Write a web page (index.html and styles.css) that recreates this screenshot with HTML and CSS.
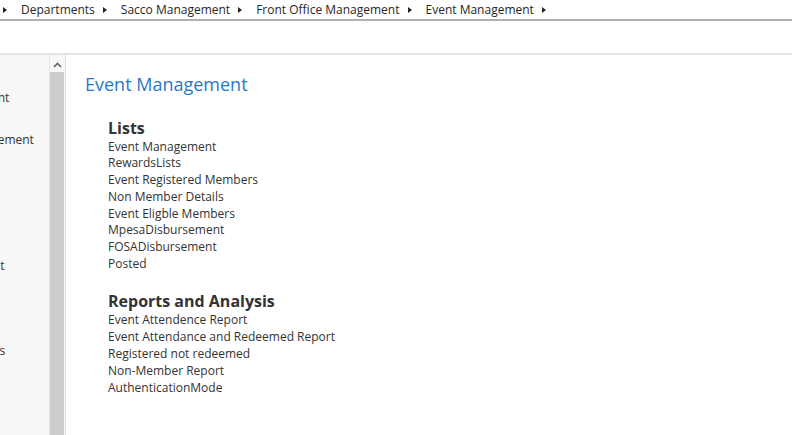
FILE: index.html
```html
<!DOCTYPE html>
<html>
<head>
<meta charset="utf-8">
<link rel="stylesheet" href="styles.css">
</head>
<body>
<div class="breadcrumb">
  <span class="arrow"></span><span class="crumb">Departments</span>
  <span class="arrow"></span><span class="crumb">Sacco Management</span>
  <span class="arrow"></span><span class="crumb">Front Office Management</span>
  <span class="arrow"></span><span class="crumb">Event Management</span>
  <span class="arrow"></span>
</div>
<div class="toolbar"></div>
<div class="main">
  <nav class="nav">
    <ul class="nav-list">
      <li class="nav-item nav-item-1">Sacco Management</li>
      <li class="nav-item nav-item-2">Front Desk Management</li>
      <li class="nav-item nav-item-3">Loans Management</li>
      <li class="nav-item nav-item-4">Setups and Reports</li>
    </ul>
  </nav>
  <div class="scrollbar">
    <div class="scroll-up">
      <svg width="9" height="6" viewBox="0 0 9 6"><path d="M1 5 L4.5 1.5 L8 5" fill="none" stroke="#606060" stroke-width="1.6"/></svg>
    </div>
    <div class="scroll-thumb"></div>
  </div>
  <div class="divider"></div>
  <main class="content">
    <h1 class="page-title">Event Management</h1>
    <section class="group">
      <h2 class="group-title">Lists</h2>
      <ul class="links">
        <li>Event Management</li>
        <li>RewardsLists</li>
        <li>Event Registered Members</li>
        <li>Non Member Details</li>
        <li>Event Eligble Members</li>
        <li>MpesaDisbursement</li>
        <li>FOSADisbursement</li>
        <li>Posted</li>
      </ul>
    </section>
    <section class="group group-reports">
      <h2 class="group-title">Reports and Analysis</h2>
      <ul class="links">
        <li>Event Attendence Report</li>
        <li>Event Attendance and Redeemed Report</li>
        <li>Registered not redeemed</li>
        <li>Non-Member Report</li>
        <li>AuthenticationMode</li>
      </ul>
    </section>
  </main>
</div>
</body>
</html>
```
FILE: styles.css
```css
* { box-sizing: border-box; }
html, body {
  margin: 0;
  padding: 0;
  height: 100%;
  overflow: hidden;
  background: #ffffff;
  font-family: "Open Sans", "Noto Sans", sans-serif;
  color: #333333;
}
.breadcrumb {
  height: 21px;
  border-bottom: 2px solid #b0b0b0;
  display: flex;
  align-items: center;
  padding-left: 3px;
  font-size: 12px;
  color: #262626;
  white-space: nowrap;
}
.arrow {
  display: inline-block;
  width: 0;
  height: 0;
  border-left: 4px solid #222;
  border-top: 3.5px solid transparent;
  border-bottom: 3.5px solid transparent;
  margin-right: 14px;
}
.crumb {
  margin-right: 8px;
}
.toolbar {
  height: 34px;
  border-bottom: 2px solid #e4e4e4;
}
.main {
  display: flex;
  height: 380px;
}
.nav {
  width: 49px;
  flex: none;
  background: #f7f7f7;
  overflow: hidden;
}
.nav-list {
  list-style: none;
  margin: 0 0 0 -100px;
  padding: 0;
  font-size: 12px;
  color: #333;
  white-space: nowrap;
}
.nav-item { height: 17px; line-height: 17px; }
.nav-item-1 { margin-top: 34px; }
.nav-item-2 { margin-top: 25px; margin-left: -4px; }
.nav-item-3 { margin-top: 109px; margin-left: -6px; }
.nav-item-4 { margin-top: 68px; margin-left: -4px; }
.scrollbar {
  width: 16px;
  flex: none;
  background: #f7f7f7;
  border-left: 1px solid #e8e8e8;
  display: flex;
  flex-direction: column;
}
.scroll-up {
  height: 17px;
  display: flex;
  align-items: center;
  justify-content: center;
  padding-top: 2px;
}
.scroll-thumb {
  flex: 1;
  margin: 0 1px 0 0;
  background: #cdcdcd;
}
.divider {
  width: 2px;
  flex: none;
  border-left: 1px solid #e0e0e0;
}
.content {
  flex: 1;
  padding: 17px 0 0 18px;
}
.page-title {
  margin: 0;
  font-size: 18px;
  font-weight: 400;
  color: #2b78c5;
  line-height: 24px;
}
.group {
  margin: 20.5px 0 0 23px;
}
.group-reports { margin-top: 17.5px; }
.group-title {
  margin: 0;
  font-size: 16px;
  font-weight: 700;
  color: #333;
  line-height: 22px;
}
.links {
  list-style: none;
  margin: 0;
  padding: 0;
  font-size: 12px;
  line-height: 16.8px;
  color: #333;
}
```
